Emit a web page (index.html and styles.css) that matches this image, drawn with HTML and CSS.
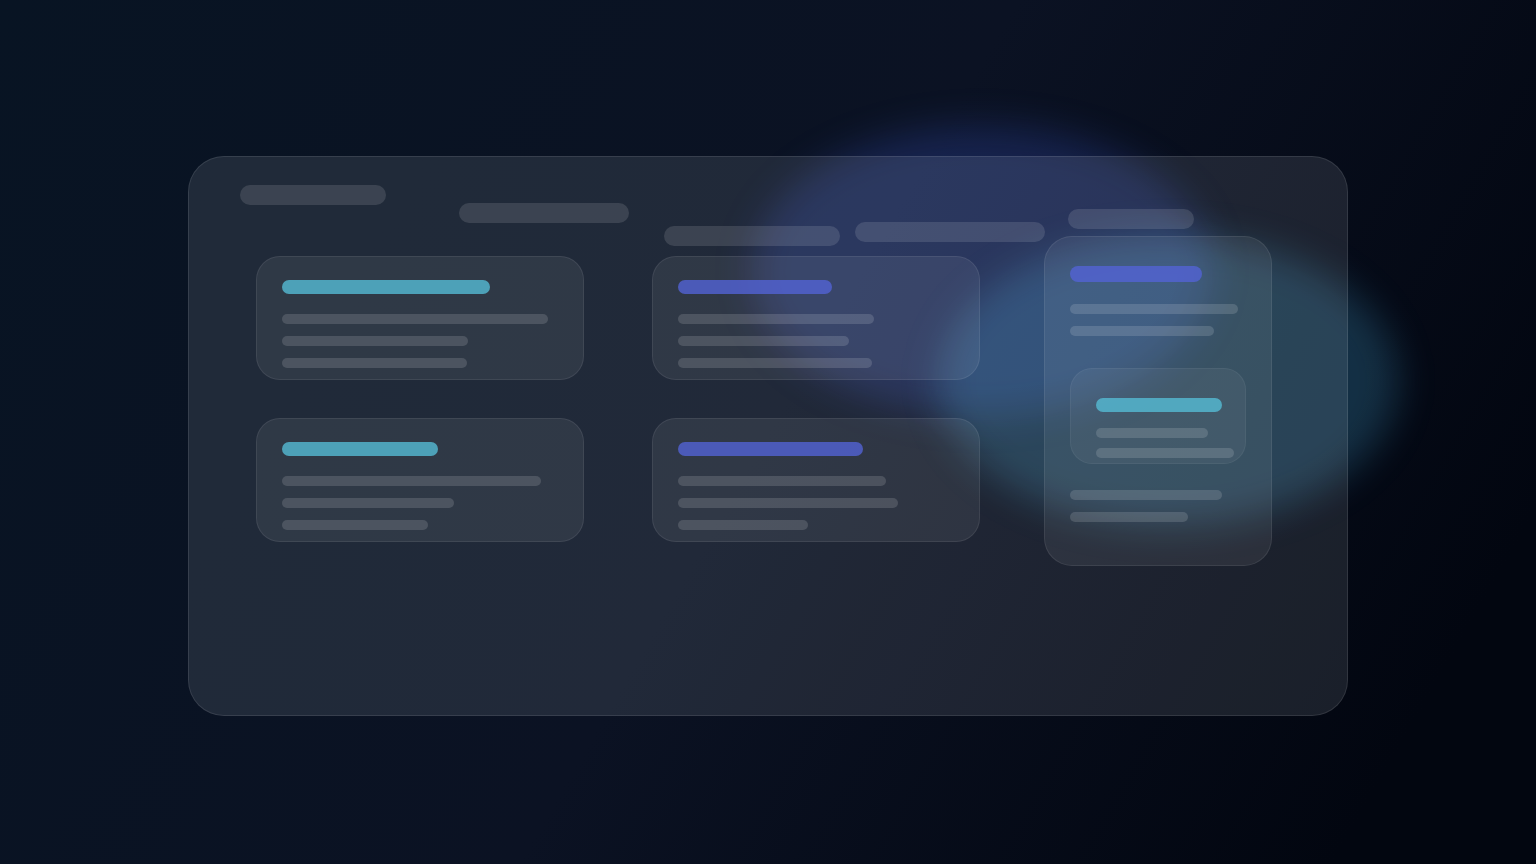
FILE: index.html
```html
<!DOCTYPE html>
<html lang="en">
<head>
    <meta charset="UTF-8">
    <meta name="viewport" content="width=device-width, initial-scale=1.0">
    <title>Dashboard</title>
    <link rel="stylesheet" href="styles.css">
</head>
<body>

<main class="stage">
    <div class="panel">
        <div class="glow glow-indigo"></div>
        <div class="glow glow-teal"></div>
        <div class="glass">
            <header class="tabs">
                <span class="pill pill-1"></span>
                <span class="pill pill-2"></span>
                <span class="pill pill-3"></span>
                <span class="pill pill-4"></span>
                <span class="pill pill-5"></span>
            </header>

            <div class="content">
                <section class="board">
                    <article class="card">
                        <div class="title teal w-208"></div>
                        <div class="line w-266"></div>
                        <div class="line w-186"></div>
                        <div class="line w-185"></div>
                    </article>
                    <article class="card">
                        <div class="title indigo w-154"></div>
                        <div class="line w-196"></div>
                        <div class="line w-171"></div>
                        <div class="line w-194"></div>
                    </article>
                    <article class="card">
                        <div class="title teal w-156"></div>
                        <div class="line w-259"></div>
                        <div class="line w-172"></div>
                        <div class="line w-146"></div>
                    </article>
                    <article class="card">
                        <div class="title indigo w-185"></div>
                        <div class="line w-208"></div>
                        <div class="line w-220"></div>
                        <div class="line w-130"></div>
                    </article>
                </section>

                <aside class="side">
                    <div class="title indigo w-132"></div>
                    <div class="line w-168"></div>
                    <div class="line w-144"></div>
                    <div class="nested">
                        <div class="title teal w-126"></div>
                        <div class="line w-112"></div>
                        <div class="line w-138"></div>
                    </div>
                    <div class="line w-152"></div>
                    <div class="line w-118"></div>
                </aside>
            </div>
        </div>
    </div>
</main>

</body>
</html>
```
FILE: styles.css
```css
* {
    box-sizing: border-box;
}
body {
    margin: 0;
    background: #020510;
}
.stage {
    min-height: 100vh;
    display: flex;
    justify-content: center;
    align-items: center;
    padding: 28px 20px 20px;
    overflow: hidden;
    background: linear-gradient(120deg, #081423 0%, #0b1223 50%, #020610 90%);
}
.panel {
    position: relative;
    width: 100%;
    max-width: 1160px;
}

/* blurred lights behind the glass */
.glow {
    position: absolute;
    width: 460px;
    height: 290px;
    border-radius: 50%;
    filter: blur(18px);
}
.glow-indigo {
    top: -30px;
    right: 136px;
    background: rgba(67, 97, 238, 0.21);
}
.glow-teal {
    top: 80px;
    right: -50px;
    background: rgba(76, 190, 240, 0.21);
}

.glass {
    position: relative;
    min-height: 560px;
    padding: 0 75px 28px 67px;
    border: 1px solid rgba(255, 255, 255, 0.1);
    border-radius: 36px;
    background: rgba(236, 250, 255, 0.1);
}

/* top row */
.tabs {
    display: flex;
    align-items: flex-start;
    height: 79px;
    margin-left: -16px;
}
.pill {
    flex: none;
    height: 20px;
    border-radius: 10px;
    background: rgba(255, 255, 255, 0.12);
}
.pill-1 {
    width: 146px;
    margin-top: 28px;
}
.pill-2 {
    width: 170px;
    margin: 46px 0 0 73px;
}
.pill-3 {
    width: 176px;
    margin: 69px 0 0 35px;
}
.pill-4 {
    width: 190px;
    margin: 65px 0 0 15px;
}
.pill-5 {
    width: 126px;
    margin: 52px 0 0 23px;
}

.content {
    display: flex;
    align-items: flex-start;
    gap: 64px;
}
.board {
    flex: 1;
    display: grid;
    grid-template-columns: 1fr 1fr;
    gap: 38px 68px;
    margin-top: 20px;
}
.card,
.side,
.nested {
    display: flex;
    flex-direction: column;
    border: 1px solid rgba(255, 255, 255, 0.08);
    background: rgba(255, 255, 255, 0.07);
}
.card {
    gap: 12px;
    padding: 23px 25px 11px;
    border-radius: 24px;
}
.side {
    flex: none;
    gap: 12px;
    width: 228px;
    padding: 29px 25px 43px;
    border-radius: 28px;
}
.nested {
    gap: 10px;
    margin: 20px 0 14px;
    padding: 29px 0 5px 25px;
    border-radius: 22px;
    border-color: rgba(255, 255, 255, 0.05);
    background: rgba(255, 255, 255, 0.05);
}

/* placeholder bars */
.title {
    height: 14px;
    margin-bottom: 8px;
    border-radius: 7px;
}
.side > .title {
    height: 16px;
    margin-bottom: 10px;
    border-radius: 8px;
}
.nested .title {
    margin-bottom: 6px;
}
.teal {
    background: rgba(85, 187, 213, 0.8);
}
.indigo {
    background: rgba(83, 99, 212, 0.8);
}
.line {
    height: 10px;
    border-radius: 5px;
    background: rgba(255, 255, 255, 0.14);
}

.w-112 { width: 112px; }
.w-118 { width: 118px; }
.w-126 { width: 126px; }
.w-130 { width: 130px; }
.w-132 { width: 132px; }
.w-138 { width: 138px; }
.w-144 { width: 144px; }
.w-146 { width: 146px; }
.w-152 { width: 152px; }
.w-154 { width: 154px; }
.w-156 { width: 156px; }
.w-168 { width: 168px; }
.w-171 { width: 171px; }
.w-172 { width: 172px; }
.w-185 { width: 185px; }
.w-186 { width: 186px; }
.w-194 { width: 194px; }
.w-196 { width: 196px; }
.w-208 { width: 208px; }
.w-220 { width: 220px; }
.w-259 { width: 259px; }
.w-266 { width: 266px; }
```
